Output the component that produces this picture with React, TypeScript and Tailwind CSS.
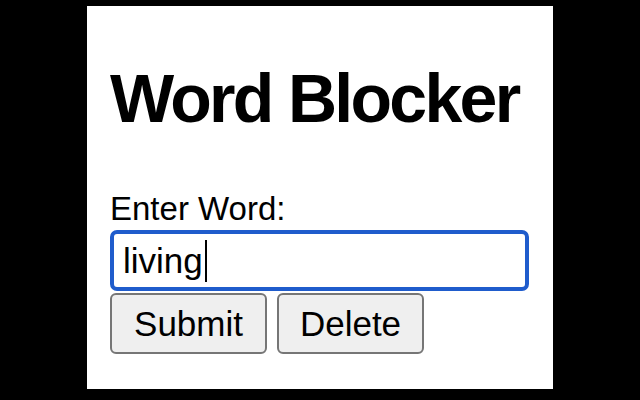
import React from "react";

export default function App() {
  return (
    <div
      className="w-[640px] h-[400px] bg-black overflow-hidden"
      style={{ fontFamily: '"Liberation Sans", Arial, Helvetica, sans-serif' }}
    >
      <div className="ml-[87px] mt-[6px] w-[466px] h-[383px] bg-white flex flex-col pl-[23px] pr-[24px]">
        <h1 className="mt-[58px] text-[68px] leading-none font-bold tracking-[-2.7px] text-black whitespace-nowrap">
          Word Blocker
        </h1>
        <label className="mt-[60px] text-[33px] leading-none text-black">Enter Word:</label>
        <div className="mt-[5px] w-[419px] h-[61px] border-[4px] border-[#1f5ccc] rounded-[7px] flex items-center pl-[9px] text-[35px] text-black">
          <span className="leading-none">living</span>
          <span className="ml-[2px] w-[2px] h-[42px] bg-black"></span>
        </div>
        <div className="mt-[2px] flex gap-[10px]">
          <button className="w-[157px] h-[61px] bg-[#efefef] border-2 border-[#767676] rounded-[6px] text-[35px] text-black leading-none">
            Submit
          </button>
          <button className="w-[147px] h-[61px] bg-[#efefef] border-2 border-[#767676] rounded-[6px] text-[35px] text-black leading-none">
            Delete
          </button>
        </div>
      </div>
    </div>
  );
}
